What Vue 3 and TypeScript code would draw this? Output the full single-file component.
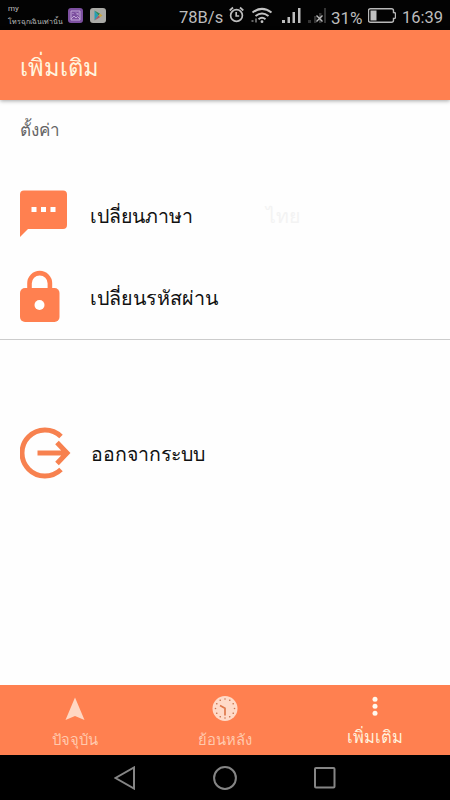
<script setup lang="ts">
interface Tab {
  id: string
  label: string
  active: boolean
}

const tabs: Tab[] = [
  { id: 'current', label: 'ปัจจุบัน', active: false },
  { id: 'history', label: 'ย้อนหลัง', active: false },
  { id: 'more', label: 'เพิ่มเติม', active: true },
]

const ticks: number[] = Array.from({ length: 12 }, (_, i) => i * 30)
</script>

<template>
  <div class="screen">
    <div class="status">
      <div class="carrier"><span>my</span><span class="emergency">โทรฉุกเฉินเท่านั้น</span></div>
      <svg class="gallery" width="15" height="15" viewBox="0 0 15 15">
        <rect width="15" height="15" rx="3" fill="#7d50a0" />
        <path d="M3 3h9v9H3zM3 11l3-3 2 2 1.500-1.500L12 11M4.500 5.500h1M8 4.500l3 3M11 4.500l-2 2" fill="none" stroke="#c8b0dc" stroke-width=".9" />
      </svg>
      <svg class="play" width="16" height="15" viewBox="0 0 16 15">
        <rect width="16" height="15" rx="3" fill="#aaaaa6" />
        <path d="M4.500 2.500v10L8.500 7.500z" fill="#249db5" />
        <path d="M4.500 2.500L8.500 7.500l1.500-1.800z" fill="#2a8a58" />
        <path d="M8.500 7.500l1.500-1.800 2.500 1.800L10 9.300z" fill="#c7a43e" />
        <path d="M4.500 12.500L8.500 7.500 10 9.300z" fill="#a85764" />
      </svg>
      <span class="speed">78B/s</span>
      <svg class="alarm" width="15" height="17" viewBox="0 0 15 17" fill="none" stroke="#bdbdbd" stroke-width="1.700">
        <circle cx="7.500" cy="9.500" r="5.900" />
        <path d="M7.200 6v4h3M.7 4.500L4 1.500M14.300 4.500L11 1.500" />
      </svg>
      <svg class="wifi" width="22" height="17" viewBox="0 0 22 17" fill="none" stroke="#c2c2c2" stroke-width="2">
        <path d="M1.500 5.500Q11-1.700 20.500 5.500M4.500 9Q11 4 17.500 9M7.500 12.200Q11 9.400 14.500 12.200" />
        <circle cx="11" cy="14.700" r="1.400" fill="#c2c2c2" stroke="none" />
        <path d="M.5 14h2M5 11.500v4" stroke="#666" />
      </svg>
      <svg class="signal" width="19" height="16" viewBox="0 0 19 16" fill="#bdbdbd">
        <path d="M0 13h3v3H0zM5.500 10h2.500v6H5.500zM10.500 5H13v11h-2.500zM16 1h2.500v15H16z" />
      </svg>
      <svg class="nosignal" width="19" height="16" viewBox="0 0 19 16">
        <path d="M0 12h3v3H0zM6 8h2.500v7H6zM11 5h2.500v10H11zM16 0h2v15h-2z" fill="#343434" />
        <path d="M8.500 7.500l6 6M14.500 7.500l-6 6" stroke="#bbb" stroke-width="1.400" />
      </svg>
      <span class="percent">31%</span>
      <svg class="battery" width="28" height="15" viewBox="0 0 28 15">
        <path d="M2.500.8h21q2 0 2 2v1.700q2 0 2 1v4q0 1-2 1v1.700q0 2-2 2h-21q-2 0-2-2V2.800q0-2 2-2z" fill="none" stroke="#b8b8b8" stroke-width="1.400" />
        <rect x="2.500" y="2.500" width="6" height="10" fill="#c0c0c0" />
      </svg>
      <span class="clock">16:39</span>
    </div>

    <header class="header"><h1>เพิ่มเติม</h1></header>

    <main class="content">
      <h2 class="section">ตั้งค่า</h2>
      <div class="row language">
        <svg width="48" height="48" viewBox="0 0 48 48">
          <path d="M4 .5h39a4 4 0 0 1 4 4V35a4 4 0 0 1-4 4H8L0 47V4.500a4 4 0 0 1 4-4z" fill="#ff8050" />
          <path d="M11.500 17h5v5h-5zM21 17h5v5h-5zM30.500 17h5v5h-5z" fill="#fff" />
        </svg>
        <span class="label lang-label">เปลี่ยนภาษา</span>
        <span class="value">ไทย</span>
      </div>
      <div class="row password">
        <svg width="40" height="52" viewBox="0 0 40 52">
          <path d="M9.500 20V13.300a10.200 10.200 0 0 1 20.400 0V20" fill="none" stroke="#ff8050" stroke-width="4.600" />
          <rect y="18" width="39.500" height="34" rx="5" fill="#ff8050" />
          <circle cx="19.500" cy="35" r="5" fill="#fff" />
        </svg>
        <span class="label pass-label">เปลี่ยนรหัสผ่าน</span>
      </div>
      <div class="row logout">
        <svg width="51" height="52" viewBox="0 0 51 52" fill="none" stroke="#f7814f">
          <path d="M41 9.500A23 23 0 1 0 41 42.500" stroke-width="5" />
          <path d="M17.500 26H47M37 15.500L47 26 37 36.500" stroke-width="5" />
        </svg>
        <span class="label out-label">ออกจากระบบ</span>
      </div>
    </main>

    <nav class="tabs">
      <div v-for="tab in tabs" :key="tab.id" class="tab" :class="[tab.id, { active: tab.active }]">
        <svg v-if="tab.id === 'current'" width="26" height="26" viewBox="0 0 26 26">
          <path d="M13 2.500L22.500 25 13 21 3.500 25z" fill="#ffd7c3" />
        </svg>
        <svg v-else-if="tab.id === 'history'" width="26" height="26" viewBox="0 0 26 26">
          <circle cx="13" cy="13.500" r="12.500" fill="#ffdac8" />
          <circle v-for="a in ticks" :key="a" cx="13" cy="4" r=".8" fill="#c97752" :transform="`rotate(${a} 13 13.500)`" />
          <path d="M8 10.500l5 2.700V20.500" fill="none" stroke="#df784b" stroke-width="1.700" />
        </svg>
        <svg v-else width="26" height="26" viewBox="0 0 26 26" fill="#fff8ee">
          <circle cx="13" cy="4.200" r="2.500" /><circle cx="13" cy="11.200" r="2.500" /><circle cx="13" cy="18.200" r="2.500" />
        </svg>
        <span>{{ tab.label }}</span>
      </div>
    </nav>

    <div class="system">
      <svg width="22" height="24" viewBox="0 0 22 24"><path d="M20 1.500v21L1.500 12z" /></svg>
      <svg width="24" height="24" viewBox="0 0 24 24"><circle cx="12" cy="12" r="10.900" /></svg>
      <svg width="22" height="22" viewBox="0 0 22 22"><rect x="1" y="1" width="19.500" height="19.500" rx="1" /></svg>
    </div>
  </div>
</template>

<style>
body {
  background: #fff;
}
</style>

<style scoped>
* {
  box-sizing: border-box;
}
svg {
  display: block;
  flex: none;
}
.screen {
  width: 450px;
  height: 800px;
  display: flex;
  flex-direction: column;
  overflow: hidden;
  background: #fefefe;
  font-family: Roboto, sans-serif;
  white-space: nowrap;
}
.status {
  height: 30px;
  flex: none;
  display: flex;
  align-items: flex-start;
  background: #030303;
  color: #bdbdbd;
  font-size: 17px;
  line-height: 20px;
}
.status span {
  flex: none;
}
.carrier {
  display: flex;
  flex-direction: column;
  width: 60px;
  margin-left: 8px;
  padding-top: 3px;
  font-size: 8px;
  line-height: 12px;
}
.emergency {
  padding-top: 1px;
  font-size: 7px;
}
.gallery { margin: 8px 0 0 0; }
.play { margin: 8px 0 0 7px; }
.speed { width: 50px; margin: 8px 0 0 73px; font-size: 16.5px; }
.alarm { margin: 6px 0 0 0; }
.wifi { margin: 7px 0 0 7px; }
.signal { margin: 7px 0 0 9px; }
.nosignal { margin: 8px 0 0 7px; }
.percent { width: 37px; margin: 8px 0 0 4px; }
.battery { margin: 8px 0 0 0; }
.clock { margin: 8px 0 0 6px; font-size: 16.5px; }
.header {
  height: 70px;
  flex: none;
  position: relative;
  background: #ff8050;
  box-shadow: 0 1px 4px rgba(0, 0, 0, 0.35);
  color: #fff5df;
}
h1 {
  margin: 0;
  padding: 20px 0 0 20px;
  font-size: 23.7px;
  line-height: 36px;
  font-weight: 400;
}
.content {
  flex: 1;
  min-height: 0;
}
.section {
  margin: 0;
  height: 90px;
  padding: 15px 0 0 20px;
  color: #656565;
  font-size: 17px;
  line-height: 30px;
  font-weight: 400;
}
.row {
  display: flex;
  padding-left: 20px;
  color: #111;
  font-size: 19.5px;
  line-height: 30px;
}
.language { height: 80px; }
.password { height: 70px; border-bottom: 1px solid #ccc; }
.logout { padding-top: 87px; }
.label { margin-top: 12px; }
.lang-label { width: 176px; margin-left: 22px; }
.pass-label { margin-left: 30px; margin-top: 14px; font-size: 19.7px; }
.out-label { margin-left: 20px; margin-top: 13px; }
.value { margin-top: 12px; color: #f3f3f3; }
.tabs {
  height: 70px;
  flex: none;
  display: grid;
  grid-template-columns: repeat(3, 1fr);
  background: #ff8050;
}
.tab {
  display: flex;
  flex-direction: column;
  align-items: center;
  padding-top: 10px;
  color: #ffc9ae;
  font-size: 14.8px;
  line-height: 24px;
}
.tab span { margin-top: 7px; }
.tab.active { color: #fff0dc; font-size: 16.5px; }
.tab.active span { margin-top: 5px; }
.system {
  height: 45px;
  flex: none;
  display: flex;
  align-items: center;
  justify-content: center;
  gap: 77px;
  background: #000;
}
.system svg {
  fill: none;
  stroke: #858585;
  stroke-width: 2;
}
</style>
